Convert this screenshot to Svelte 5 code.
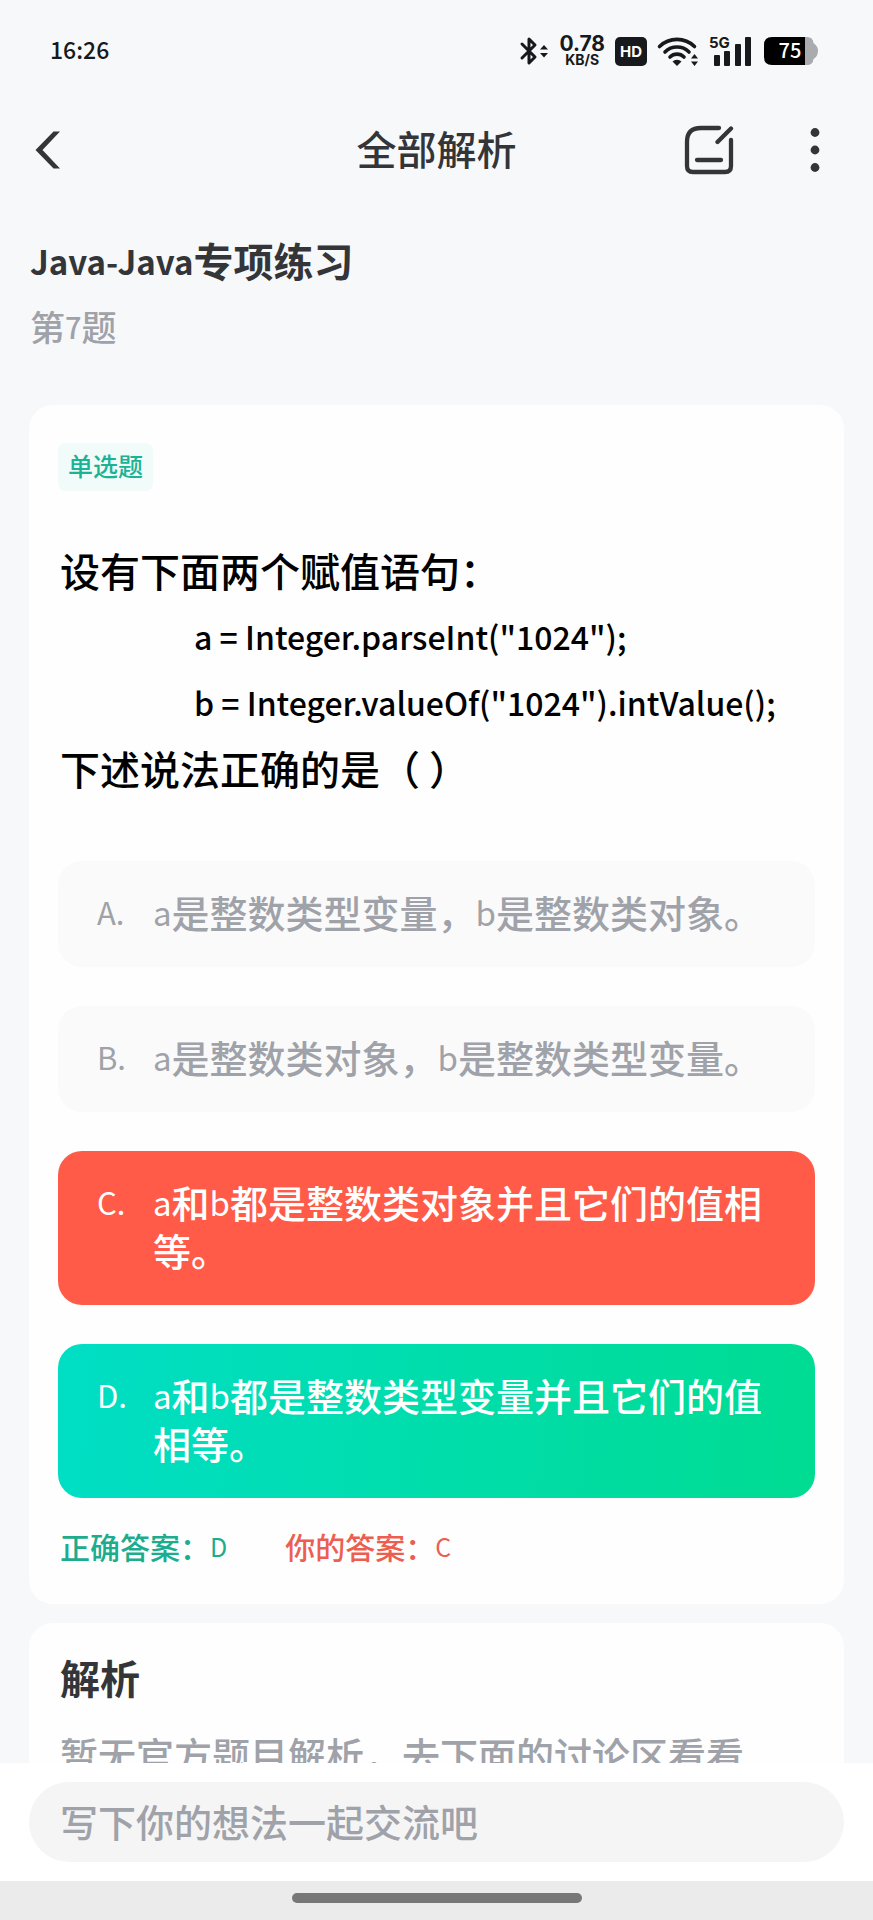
<script>
  const options = [
    { key: 'A', text: 'a是整数类型变量，b是整数类对象。', state: 'idle' },
    { key: 'B', text: 'a是整数类对象，b是整数类型变量。', state: 'idle' },
    { key: 'C', text: 'a和b都是整数类对象并且它们的值相等。', state: 'wrong' },
    { key: 'D', text: 'a和b都是整数类型变量并且它们的值相等。', state: 'right' }
  ];

  // Splits a string into Latin and Chinese runs, so Latin can be set smaller.
  function runs(text) {
    return (text.match(/[\x20-\x7e]+|[^\x20-\x7e]+/g) ?? []).map((value) => ({
      value,
      latin: /^[\x20-\x7e]/.test(value)
    }));
  }
</script>

{#snippet mixed(text)}{#each runs(text) as run}{#if run.latin}<span class="latin">{run.value}</span>{:else}{run.value}{/if}{/each}{/snippet}

<div class="screen">
  <div class="status">
    <span class="time">16:26</span>
    <div class="indicators">
      <svg width="29" height="30" viewBox="0 0 29 30" aria-hidden="true">
        <path d="M2 8 L15 21 L9 27 V3 L15 9 L2 22" fill="none" stroke="#17191c" stroke-width="3" stroke-linejoin="round" stroke-linecap="round" />
        <path d="M20 13.5 L24 9 L28 13.5Z M20 17 L24 21.500 L28 17Z" fill="#17191c" />
      </svg>
      <span class="speed"><b>0.78</b><small>KB/S</small></span>
      <span class="hd">HD</span>
      <svg width="42" height="31" viewBox="0 0 42 31" aria-hidden="true">
        <g fill="none" stroke="#17191c" stroke-width="3.600" stroke-linecap="round">
          <path d="M2.500 10.500 A25 25 0 0 1 37.500 10.500" />
          <path d="M8 16 A17 17 0 0 1 32 16" />
          <path d="M13 21 A10 10 0 0 1 27 21" />
        </g>
        <path d="M20 30 L15.500 25.500 A6.500 6.500 0 0 1 24.500 25.500Z" fill="#17191c" />
        <path d="M34 22.500 L37.500 18 L41 22.500Z M34 25.500 L37.500 30 L41 25.500Z" fill="#17191c" />
      </svg>
      <svg width="43" height="31" viewBox="0 0 43 31" role="img" aria-label="5G">
        <text x="0" y="12" class="net">5G</text>
        <g fill="#17191c">
          <rect x="5" y="19" width="6" height="11" rx="1" />
          <rect x="15" y="15" width="6" height="15" rx="1" />
          <rect x="26" y="8" width="6" height="22" rx="1" />
          <rect x="36" y="1" width="6" height="29" rx="1" />
        </g>
      </svg>
      <svg class="battery" width="54" height="28" viewBox="0 0 54 28" role="img" aria-label="75%">
        <path d="M41 0 H43 Q49 0 49.500 6 Q54 9 54 14 Q54 19 49.500 22 Q49 28 43 28 H41Z" fill="#a9abae" />
        <path d="M41 0 H8 Q0 0 0 8 V20 Q0 28 8 28 H41Z" fill="#000" />
        <text x="26" y="21" text-anchor="middle" class="charge">75</text>
      </svg>
    </div>
  </div>

  <header class="nav">
    <button class="icon" aria-label="返回">
      <svg width="26" height="38" viewBox="0 0 26 38"><path d="M18.500 0.500 H25 L7.500 19 L25 37.500 H18.500 L0.500 19Z" fill="#333538" /></svg>
    </button>
    <h1>全部解析</h1>
    <div class="actions">
      <button class="icon" aria-label="草稿">
        <svg width="50" height="50" viewBox="0 0 50 50" fill="none" stroke="#333538" stroke-width="4.300" stroke-linecap="round">
          <path d="M35 3 H17 Q3 3 3 17 V41 Q3 47 9 47 H41 Q47 47 47 41 V15" />
          <path d="M33.500 17 L47 3.500 M13 35 H37" />
        </svg>
      </button>
      <button class="icon" aria-label="更多">
        <svg width="10" height="46" viewBox="0 0 10 46" fill="#333538"><circle cx="5" cy="5.500" r="4.400" /><circle cx="5" cy="23" r="4.400" /><circle cx="5" cy="40.500" r="4.400" /></svg>
      </button>
    </div>
  </header>

  <main>
    <div class="intro">
      <h2>{@render mixed('Java-Java专项练习')}</h2>
      <p>{@render mixed('第7题')}</p>
    </div>

    <section class="card">
      <span class="tag">单选题</span>
      <div class="question">
        <p>设有下面两个赋值语句：</p>
        <p class="code">a = Integer.parseInt("1024");</p>
        <p class="code">b = Integer.valueOf("1024").intValue();</p>
        <p>下述说法正确的是（ ）</p>
      </div>
      <ul class="options">
        {#each options as option}
          <li class={option.state}>
            <span class="key">{option.key}.</span>
            <span class="text">{@render mixed(option.text)}</span>
          </li>
        {/each}
      </ul>
      <div class="result">
        <span class="good">正确答案：{@render mixed('D')}</span>
        <span class="bad">你的答案：{@render mixed('C')}</span>
      </div>
    </section>

    <section class="card notes">
      <h3>解析</h3>
      <p>暂无官方题目解析，去下面的讨论区看看</p>
    </section>
  </main>

  <footer>
    <input type="text" aria-label="写下你的想法一起交流吧" placeholder="写下你的想法一起交流吧" />
  </footer>
  <div class="home"><i></i></div>
</div>

<style>
  :global(body) { background: #f7f8fa; }
  * { box-sizing: border-box; margin: 0; padding: 0; }
  .screen {
    display: flex;
    flex-direction: column;
    height: 100vh;
    background: #f7f8fa;
    color: #333538;
    font-family: "Noto Sans CJK SC", sans-serif;
    font-weight: 500;
  }
  .latin { line-height: 1; }
  .status {
    flex: none;
    display: flex;
    align-items: center;
    justify-content: space-between;
    height: 102px;
    padding: 0 55px 0 50px;
    color: #17191c;
  }
  .time { padding-bottom: 4px; font-size: 23px; }
  .indicators { display: flex; align-items: center; gap: 10px; }
  .indicators svg { overflow: visible; }
  .speed { display: flex; flex-direction: column; align-items: center; font-family: Inter, sans-serif; }
  .speed b { font-size: 21px; line-height: 18px; font-weight: 700; }
  .speed small { font-size: 14px; line-height: 14px; font-weight: 700; }
  .hd {
    width: 32px;
    border-radius: 5px;
    background: #17191c;
    color: #fff;
    font: 700 15px/29px Inter, sans-serif;
    text-align: center;
  }
  .net { font: 700 15px Inter, sans-serif; fill: #17191c; }
  .battery { margin-left: 2px; }
  .charge { font: 500 20px "Noto Sans CJK SC", sans-serif; fill: #fff; }

  .nav {
    flex: none;
    display: grid;
    grid-template-columns: 1fr auto 1fr;
    align-items: center;
    height: 96px;
    padding: 0 35px;
  }
  .icon { display: block; justify-self: start; border: 0; background: none; cursor: pointer; }
  .icon svg { display: block; }
  h1 { padding-bottom: 4px; font-size: 40px; line-height: 48px; font-weight: 500; }
  .actions { display: flex; align-items: center; justify-content: flex-end; gap: 76px; padding-right: 18px; }

  main { flex: 1; min-height: 0; overflow: hidden; padding: 0 29px; }
  .intro { padding: 38px 1px 0; }
  h2 { font-size: 40px; line-height: 48px; font-weight: 700; }
  h2 .latin { font-size: 33px; }
  .intro p { margin: 21px 0 58px; font-size: 35px; line-height: 42px; color: #9fa2a8; }
  .intro .latin { vertical-align: 2px; }
  .intro p .latin { font-size: 29px; }

  .card { padding: 38px 29px 34px; border-radius: 24px; background: #fefefe; }
  .tag {
    display: inline-block;
    padding: 0 10px 4px;
    border-radius: 8px;
    background: #f1fbfa;
    color: #1cb294;
    font-size: 25px;
    line-height: 44px;
    vertical-align: top;
  }
  .question { padding: 46px 2px 0; color: #000; font-size: 40px; line-height: 66px; }
  .question .code { padding-left: 134px; font-size: 32px; white-space: nowrap; }

  .options { display: grid; gap: 39px; margin-top: 60px; list-style: none; }
  li { display: flex; padding: 27px 39px 31px; border-radius: 24px; font-size: 38px; line-height: 48px; }
  .key { flex: none; width: 56px; font-size: 31px; font-weight: 400; }
  .text { flex: 1; margin-right: -4px; }
  .text .latin { font-size: 33px; font-weight: 400; vertical-align: 2px; }
  .idle { background: #fafafb; color: #9fa2a8; }
  .wrong { background: #ff5b48; color: #fff; }
  .right { background: linear-gradient(95deg, #00dec5, #00dc92); color: #fff; }

  .result { display: flex; gap: 58px; padding: 24px 2px 0; font-size: 30px; line-height: 48px; }
  .result .latin { font-size: 25px; font-weight: 400; vertical-align: 2px; }
  .good { color: #1cac8e; }
  .bad { color: #ec5f50; }

  .notes { margin-top: 19px; padding: 30px 31px; }
  h3 { font-size: 40px; line-height: 48px; font-weight: 700; }
  .notes p { margin-top: 29px; font-size: 38px; line-height: 48px; color: #9fa2a8; }

  footer { flex: none; padding: 19px 29px; background: #fff; }
  input {
    display: block;
    width: 100%;
    height: 80px;
    padding: 0 31px 4px;
    border: 0;
    border-radius: 40px;
    background: #f5f5f6;
    color: #333538;
    font: 500 38px "Noto Sans CJK SC", sans-serif;
  }
  input::placeholder { color: #9fa2a8; opacity: 1; }
  .home { flex: none; display: flex; justify-content: center; height: 39px; padding-top: 12px; background: #ebebeb; }
  .home i { width: 290px; max-width: 40%; height: 10px; border-radius: 5px; background: #777; }
</style>
